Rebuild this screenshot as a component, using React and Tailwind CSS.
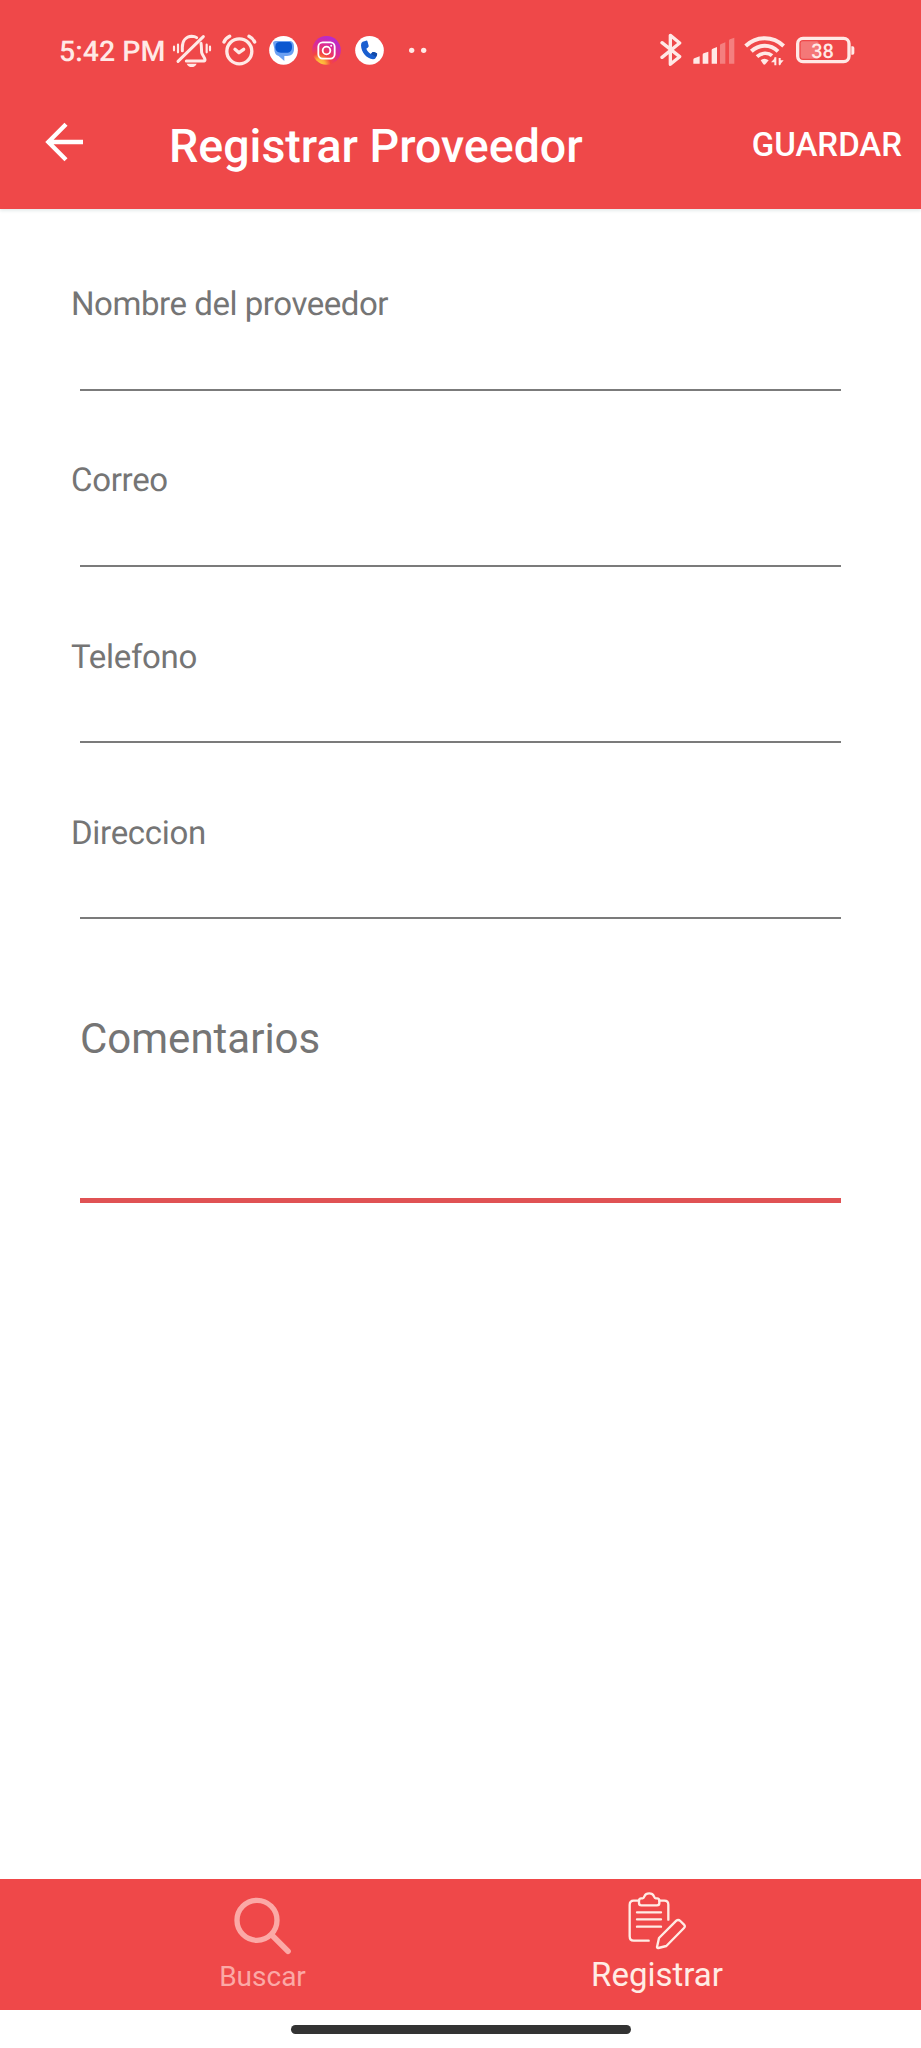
const CREAM = "#ffe9e6";

function StatusIcon({ width, children, className = "" }) {
  return (
    <svg
      className={`h-[60px] shrink-0 ${className}`}
      width={width}
      height="60"
      viewBox={`0 0 ${width * 3} 180`}
      fill="none"
      stroke={CREAM}
      strokeLinecap="round"
      strokeLinejoin="round"
    >
      {children}
    </svg>
  );
}

function BellOff() {
  return (
    <StatusIcon width={40} className="ml-[6px]">
      <path d="M31 92V82C31 62 42 50 59 49C65 49 70 50 74 53" strokeWidth="9" />
      <path d="M87 70C89 78 88 90 89 98C91 106 99 113 99 119C99 123 96 123 92 123H43" strokeWidth="9" />
      <path d="M18 124L94 50" strokeWidth="9" />
      <path d="M44 131H74C71 138 66 141 59 141C52 141 47 138 44 131Z" fill={CREAM} stroke="none" />
      <path d="M6 80V91M18 74V97M104 74V97M114 80V91" strokeWidth="6.500" />
    </StatusIcon>
  );
}

function Alarm() {
  return (
    <StatusIcon width={35} className="ml-[10px]">
      <circle cx="52" cy="94" r="37.500" strokeWidth="10" />
      <path d="M39 88L51 98L65 88" strokeWidth="10" />
      <path d="M6 66C9 59 15 53 23 49M81 49C89 53 95 59 98 66" strokeWidth="10" />
    </StatusIcon>
  );
}

function Messages() {
  return (
    <StatusIcon width={29} className="ml-[12px]">
      <circle cx="43.500" cy="91" r="43" fill="#fff" stroke="none" />
      <path d="M20 63H60C71 63 75 69 75 80V88C75 101 67 108 54 108H46V123L29 108C19 105 16 96 16 86L12 68Q13 63 20 63Z" fill="#6ba0f2" stroke="none" />
      <path d="M32 66H58C67 66 69 72 69 80C69 92 63 98 52 98H36C24 98 19 91 19 81C19 71 23 66 32 66Z" fill="#0b57d0" stroke="none" />
    </StatusIcon>
  );
}

function Instagram() {
  return (
    <StatusIcon width={29} className="ml-[14px]">
      <defs>
        <radialGradient id="ig" cx="0.25" cy="1.02" r="1.05">
          <stop offset="0" stopColor="#ffd23f" />
          <stop offset="0.2" stopColor="#fdae3a" />
          <stop offset="0.38" stopColor="#f5453f" />
          <stop offset="0.7" stopColor="#dd2a92" />
          <stop offset="1" stopColor="#b52bd0" />
        </radialGradient>
      </defs>
      <circle cx="43.500" cy="91" r="43" fill="url(#ig)" stroke="none" />
      <rect x="19" y="67" width="49" height="49" rx="13" stroke="#fff" strokeWidth="5.500" />
      <circle cx="43.500" cy="91.500" r="11.500" stroke="#fff" strokeWidth="5.500" />
      <circle cx="57.500" cy="77.500" r="3" fill="#fff" stroke="none" />
    </StatusIcon>
  );
}

function Phone() {
  return (
    <StatusIcon width={29} className="ml-[14px]">
      <circle cx="43.500" cy="91" r="43" fill="#fff" stroke="none" />
      <path d="M23 65L33 62Q37 61 38 66L41 77Q42 80 38 83L34 86C37 93 41 98 48 102L52 97Q54 95 57 96L64 99Q68 101 66 105L62 114Q60 118 54 118C35 116 19 98 18 76Q18 67 23 65Z" fill="#1a5fd0" stroke="none" />
      <path d="M52 97Q54 95 57 96L64 99Q68 101 66 105L63 111L48 102Z" fill="#124aa8" stroke="none" />
    </StatusIcon>
  );
}

function Dots() {
  return (
    <StatusIcon width={24} className="ml-[20px]">
      <circle cx="23" cy="91" r="8" fill={CREAM} stroke="none" />
      <circle cx="59" cy="91" r="8" fill={CREAM} stroke="none" />
    </StatusIcon>
  );
}

function Bluetooth() {
  return (
    <StatusIcon width={22}>
      <path d="M6 68L59 110L31 133V46L59 69L6 112" strokeWidth="10" />
    </StatusIcon>
  );
}

function Signal() {
  return (
    <StatusIcon width={42} className="ml-[11px]">
      <g stroke="none" fill={CREAM}>
        <path d="M1 131V119Q1 116 4 115L20 109V131Z" />
        <path d="M29 131V104Q29 101 32 100L46 95V131Z" />
        <path d="M56 131V90Q56 87 59 86L72 81V131Z" />
        <path d="M81 131V76Q81 73 84 72L97 67V131Z" opacity="0.35" />
        <path d="M108 131V62Q108 59 111 58L124 53V131Z" opacity="0.35" />
      </g>
    </StatusIcon>
  );
}

function Wifi() {
  return (
    <StatusIcon width={41} className="ml-[9px]">
      <path d="M5 78C37 47 87 47 119 78" strokeWidth="12" strokeLinecap="butt" />
      <path d="M22 94C46 72 79 72 102 94" strokeWidth="12" strokeLinecap="butt" />
      <path d="M39 110C53 97 73 97 84 107" strokeWidth="11" strokeLinecap="butt" />
      <path d="M50 121Q61 111 74 121L64 133Q61 135 58 133Z" fill={CREAM} stroke="none" />
      <path d="M94 112V136M107 114V134" strokeWidth="6" strokeLinecap="butt" />
      <path d="M95 112V127H81ZM105 137V121H119Z" fill={CREAM} stroke="none" />
    </StatusIcon>
  );
}

function Battery() {
  return (
    <div className="relative ml-[11px] h-[60px] w-[60px] shrink-0">
      <StatusIcon width={60}>
        <rect x="14" y="64" width="54" height="52" rx="6" fill={CREAM} opacity="0.3" stroke="none" />
        <rect x="5" y="55" width="154" height="70" rx="16" strokeWidth="10" />
        <path d="M166 79H170Q175 79 175 84V99Q175 104 170 104H166Z" fill={CREAM} stroke="none" />
      </StatusIcon>
      <span className="absolute left-[14px] top-[20px] w-[25px] text-center text-[20px] font-medium leading-[23px] text-[#ffe9e6]">
        38
      </span>
    </div>
  );
}

function StatusBar() {
  return (
    <div className="flex h-[80px] items-end pl-[59px] pr-[65px]">
      <span className="flex h-[60px] w-[107px] items-center whitespace-nowrap pt-[4px] text-[28.500px] font-medium leading-[32px] text-[#ffe9e6]">
        5:42 PM
      </span>
      <BellOff />
      <Alarm />
      <Messages />
      <Instagram />
      <Phone />
      <Dots />
      <div className="ml-auto flex">
        <Bluetooth />
        <Signal />
        <Wifi />
        <Battery />
      </div>
    </div>
  );
}

function Toolbar() {
  return (
    <div className="flex h-[129px] items-start pl-[44px] pr-[19px] text-white">
      <svg className="mt-[42px]" width="40" height="40" viewBox="0 0 120 120" fill="none" stroke="#fff" strokeWidth="13">
        <path d="M117 60H15M66 7L13 60L66 113" />
      </svg>
      <h1 className="ml-[85px] mt-[39px] whitespace-nowrap text-[46.500px] font-medium leading-[56px]">Registrar Proveedor</h1>
      <button className="ml-auto mt-[45px] text-[33px] font-medium leading-[40px]">GUARDAR</button>
    </div>
  );
}

function Field({ label, tracking = "tracking-[-0.3px]" }) {
  return (
    <label className="flex h-[176.300px] flex-col">
      <span className={`pl-[71px] pt-px text-[33px] leading-[40px] text-[#757575] ${tracking}`}>{label}</span>
      <input className="ml-[80px] h-[65.500px] w-[761px] border-b-[2.500px] border-[#7b7b7b] bg-transparent outline-none" />
    </label>
  );
}

function ClipboardPen() {
  return (
    <svg className="mr-[9px] overflow-visible" width="60" height="60" viewBox="0 0 180 180" fill="none" stroke="#ffece5" strokeWidth="7" strokeLinecap="round" strokeLinejoin="round">
      <path d="M77 155H32Q20 155 20 142V48Q20 35 32 35H48M109 35H124Q136 35 136 47V92" />
      <path d="M55 49Q48 49 48 42V35Q48 28 55 28H59C63 28 63 24 65 20C69 11 88 11 92 20C94 24 94 28 98 28H102Q109 28 109 35V42Q109 49 102 49Z" />
      <path d="M42 70H114M42 91H114M42 113H114" />
      <path d="M108 147L160 95Q166 90 172 96L183 107Q188 112 183 117L130 171L106 177Q102 178 102 174Z" />
    </svg>
  );
}

function BottomNav() {
  return (
    <nav className="flex h-[131px] w-full shrink-0 bg-[#ef4849]">
      <button className="flex w-[525px] flex-col items-center pt-[17px] text-[#fba9a6]">
        <svg width="60" height="60" viewBox="0 0 180 180" fill="none" stroke="currentColor" strokeLinecap="round">
          <circle cx="72" cy="73" r="60" strokeWidth="16" />
          <path d="M117 118L165 166" strokeWidth="17" />
        </svg>
        <span className="mt-[5px] text-[28px] leading-[32px]">Buscar</span>
      </button>
      <button className="flex w-[264px] flex-col items-center pt-[10px] text-[#ffece5]">
        <ClipboardPen />
        <span className="mt-[6px] text-[33px] leading-[40px]">Registrar</span>
      </button>
    </nav>
  );
}

export default function App() {
  return (
    <div className="flex h-[2048px] w-[921px] flex-col overflow-hidden bg-white font-['Roboto',sans-serif] [text-rendering:geometricPrecision]">
      <header className="h-[209px] shrink-0 bg-[#ef4849] shadow-[0_2px_3px_rgba(0,70,70,0.10)]">
        <StatusBar />
        <Toolbar />
      </header>
      <main className="flex flex-1 flex-col pt-[75px]">
        <Field label="Nombre del proveedor" tracking="tracking-[-0.45px]" />
        <Field label="Correo" />
        <Field label="Telefono" />
        <Field label="Direccion" />
        <textarea
          placeholder="Comentarios"
          className="ml-[80px] mt-[24px] h-[190px] w-[761px] resize-none border-b-[5px] border-[#e05254] bg-transparent pt-px text-[42px] leading-[50px] outline-none placeholder:text-[#757575]"
        />
      </main>
      <BottomNav />
      <footer className="flex h-[38px] shrink-0 justify-center pt-[15px]">
        <div className="h-[9px] w-[340px] rounded-full bg-[#333333]" />
      </footer>
    </div>
  );
}
